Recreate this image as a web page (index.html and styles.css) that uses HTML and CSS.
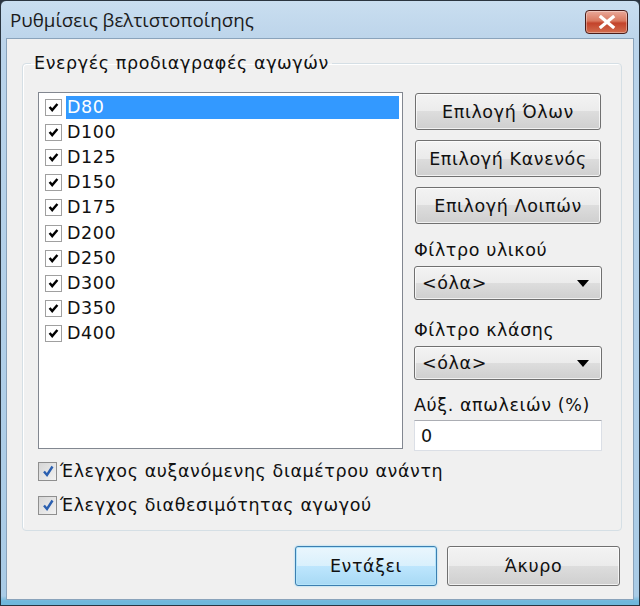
FILE: index.html
```html
<!DOCTYPE html>
<html>
<head>
<meta charset="utf-8">
<link rel="stylesheet" href="styles.css">
</head>
<body>
<div class="window">
  <div class="titlebar">
    <span class="title">Ρυθμίσεις βελτιστοποίησης</span>
    <button class="close" aria-label="close">
      <svg width="20" height="14" viewBox="0 0 20 14"><path d="M4 2 L16 12 M16 2 L4 12" stroke="#fff" stroke-width="3.2" stroke-linecap="square" fill="none"/></svg>
    </button>
  </div>
  <div class="client">
    <fieldset class="group">
      <legend>Ενεργές προδιαγραφές αγωγών</legend>
      <div class="group-main">
        <div class="listbox">
          <div class="item sel"><span class="cb"></span><span class="lbl">D80</span></div>
          <div class="item"><span class="cb"></span><span class="lbl">D100</span></div>
          <div class="item"><span class="cb"></span><span class="lbl">D125</span></div>
          <div class="item"><span class="cb"></span><span class="lbl">D150</span></div>
          <div class="item"><span class="cb"></span><span class="lbl">D175</span></div>
          <div class="item"><span class="cb"></span><span class="lbl">D200</span></div>
          <div class="item"><span class="cb"></span><span class="lbl">D250</span></div>
          <div class="item"><span class="cb"></span><span class="lbl">D300</span></div>
          <div class="item"><span class="cb"></span><span class="lbl">D350</span></div>
          <div class="item"><span class="cb"></span><span class="lbl">D400</span></div>
        </div>
        <div class="side">
          <button class="btn side-btn">Επιλογή Όλων</button>
          <button class="btn side-btn">Επιλογή Κανενός</button>
          <button class="btn side-btn">Επιλογή Λοιπών</button>
          <div class="field-label l1">Φίλτρο υλικού</div>
          <div class="combo"><span>&lt;όλα&gt;</span><span class="arrow"></span></div>
          <div class="field-label l2">Φίλτρο κλάσης</div>
          <div class="combo"><span>&lt;όλα&gt;</span><span class="arrow"></span></div>
          <div class="field-label l3">Αύξ. απωλειών (%)</div>
          <div class="textbox">0</div>
        </div>
      </div>
      <div class="checks">
        <div class="check-row"><span class="vcb"><svg width="14" height="14" viewBox="0 0 14 14"><path d="M3 7.5 L6 11 L11.5 2.5" stroke="#2a5fb0" stroke-width="2.4" fill="none"/></svg></span>Έλεγχος αυξανόμενης διαμέτρου ανάντη</div>
        <div class="check-row"><span class="vcb"><svg width="14" height="14" viewBox="0 0 14 14"><path d="M3 7.5 L6 11 L11.5 2.5" stroke="#2a5fb0" stroke-width="2.4" fill="none"/></svg></span>Έλεγχος διαθεσιμότητας αγωγού</div>
      </div>
    </fieldset>
    <div class="footer">
      <button class="btn dlg default">Εντάξει</button>
      <button class="btn dlg">Άκυρο</button>
    </div>
  </div>
</div>
</body>
</html>
```
FILE: styles.css
```css
* { box-sizing: border-box; }
html, body { margin: 0; padding: 0; background: #2b3440; }
body { width: 640px; height: 606px; overflow: hidden; }

.window {
  width: 640px;
  height: 606px;
  border: 1px solid #2a3540;
  border-radius: 6px 6px 0 0;
  background: linear-gradient(#c9def0, #bcd4ea 40px, #b9d3ea 60px, #a9cbe6 595px, #6fb8dc 600px);
  display: flex;
  flex-direction: column;
  font-family: "DejaVu Sans", sans-serif;
  font-size: 17.5px;
  letter-spacing: 0.6px;
  color: #111;
}

.titlebar {
  height: 37px;
  flex: none;
  display: flex;
  align-items: center;
  justify-content: space-between;
  padding: 0 11px 0 9px;
}
.title {
  font-family: "Open Sans", sans-serif;
  font-size: 18.8px;
  letter-spacing: 0;
  color: #1b1b1b;
}
.close {
  width: 43px;
  height: 24px;
  margin-top: 4px;
  border: 1px solid #4a1d1a;
  border-radius: 4px;
  background: linear-gradient(#e9a99a, #d9785f 45%, #c3432b 55%, #d26d4f);
  display: flex;
  align-items: center;
  justify-content: center;
  padding: 0;
  box-shadow: inset 0 0 0 1px rgba(255,255,255,0.35);
}

.client {
  flex: 1;
  margin: 0 5px 5px 5px;
  background: #f0f0f0;
  border: 1px solid #8aa3bb;
  display: flex;
  flex-direction: column;
  padding: 14px 12px 0 15px;
}

.group {
  margin: 0;
  border: 1px solid #d5dfe5;
  border-radius: 4px;
  padding: 19px 19px 0 15px;
  height: 478px;
  box-shadow: inset 1px 1px 0 #fff;
}
.group legend {
  padding: 0 3px;
  margin-left: -7px;
  color: #111;
}

.group-main {
  display: flex;
  gap: 11px;
}

.listbox {
  width: 365px;
  height: 357px;
  background: #fff;
  border: 1px solid #828790;
  padding: 2px 3px;
}
.item {
  height: 25.1px;
  display: flex;
  align-items: center;
}
.cb {
  width: 17px;
  height: 17px;
  border: 1px solid #a0a0a0;
  margin-left: 3px;
  margin-right: 4px;
  background: #fff url("data:image/svg+xml,%3Csvg xmlns='http://www.w3.org/2000/svg' viewBox='0 0 15 15'%3E%3Cpath d='M3 7 L6 10.5 L12 3.5' stroke='%23000' stroke-width='2.8' fill='none'/%3E%3C/svg%3E") center/13px 13px no-repeat;
  flex: none;
}
.lbl {
  padding: 2px 1px;
  line-height: 19px;
}
.item.sel .lbl {
  flex: 1;
  background: #3399ff;
  color: #fff;
}

.side {
  width: 188px;
  display: flex;
  flex-direction: column;
}
.btn {
  font: inherit;
  letter-spacing: inherit;
  color: #111;
  border: 1px solid #707070;
  border-radius: 3px;
  background: linear-gradient(#f3f3f3, #ebebeb 50%, #dddddd 50%, #cfcfcf);
  box-shadow: inset 0 0 0 1px rgba(255,255,255,0.7);
  padding: 0;
}
.side-btn {
  margin-left: 1px;
  width: 186px;
  height: 37px;
  margin-bottom: 10px;
  margin-top: 1px;
}
.side-btn + .side-btn { margin-top: 0; }
.field-label {
  line-height: 20px;
}
.l1 { margin-top: 6px; margin-bottom: 6px; }
.l2 { margin-top: 20px; margin-bottom: 6px; }
.l3 { margin-top: 15px; margin-bottom: 5px; }
.combo {
  height: 34px;
  border: 1px solid #707070;
  border-radius: 3px;
  background: linear-gradient(#f3f3f3, #ebebeb 50%, #dddddd 50%, #cfcfcf);
  box-shadow: inset 0 0 0 1px rgba(255,255,255,0.7);
  display: flex;
  align-items: center;
  justify-content: space-between;
  padding: 0 12px 0 7px;
}
.arrow {
  width: 0;
  height: 0;
  border-left: 6px solid transparent;
  border-right: 6px solid transparent;
  border-top: 7px solid #000;
}
.textbox {
  height: 31px;
  background: #fff;
  border: 1px solid #dbdfe6;
  border-top-color: #abadb3;
  padding: 5px 6px;
  line-height: 20px;
}

.checks {
  padding-top: 3px;
}
.check-row {
  display: flex;
  align-items: center;
  height: 34px;
}
.vcb {
  width: 19px;
  height: 19px;
  border: 1px solid #8f8f8f;
  background: linear-gradient(135deg, #d6d6d6, #f2f2f2);
  margin-right: 3px;
  display: flex;
  align-items: center;
  justify-content: center;
}

.footer {
  display: flex;
  justify-content: flex-end;
  gap: 10px;
  padding-top: 15px;
  padding-right: 1px;
}
.dlg {
  width: 142px;
  height: 40px;
}
.dlg + .dlg { width: 173px; }
.dlg.default {
  border-color: #3c7fb1;
  background: linear-gradient(#eaf6fd, #d9f0fc 50%, #bee6fd 50%, #a7d9f5);
  box-shadow: inset 0 0 0 1px #b4e4fa, 0 0 2px #7fd0f5;
}
```
